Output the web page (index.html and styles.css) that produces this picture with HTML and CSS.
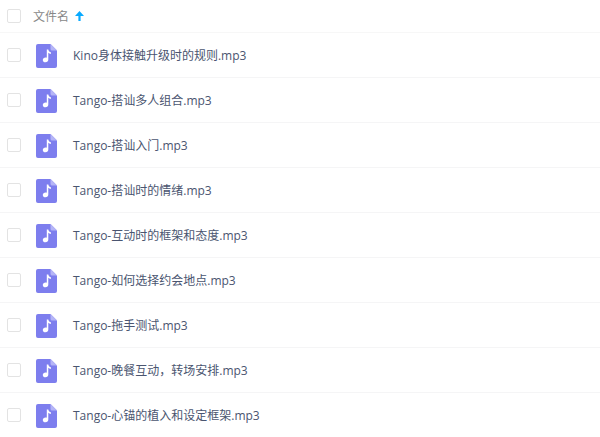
FILE: index.html
```html
<!DOCTYPE html>
<html lang="zh">
<head>
    <meta charset="UTF-8">
    <title>文件列表</title>
    <link rel="stylesheet" href="styles.css">
</head>
<body>
<svg class="sprite" width="0" height="0">
    <symbol id="music" viewBox="0 0 21 24">
        <path d="M2 0H14.500L21 6.500V22a2 2 0 0 1-2 2H2a2 2 0 0 1-2-2V2a2 2 0 0 1 2-2z" fill="#7d7eee"/>
        <path d="M14.500 0L21 6.500H16a1.500 1.500 0 0 1-1.500-1.500z" fill="#b4b4f6"/>
        <path d="M10.800 5.500h1.500c.2 1.600 1.100 2.400 2.600 2.800v1.600c-1.100-.2-2-.6-2.600-1.200v6.800c0 1.700-1.200 2.800-2.800 2.800s-2.700-1-2.700-2.400 1.200-2.500 2.800-2.500c.5 0 .9.100 1.200.3z" fill="#fff"/>
    </symbol>
</svg>
<div class="list">
    <div class="head">
        <span class="check"></span>
        <span class="head-name">文件名</span>
        <svg class="arrow" width="9" height="10" viewBox="0 0 9 10"><path d="M4.500 0L9 5H5.600v5H3.400V5H0z" fill="#09aaff"/></svg>
    </div>
    <div class="row"><span class="check"></span><svg class="icon"><use href="#music"/></svg><span class="name">Kino身体接触升级时的规则.mp3</span></div>
    <div class="row"><span class="check"></span><svg class="icon"><use href="#music"/></svg><span class="name">Tango-搭讪多人组合.mp3</span></div>
    <div class="row"><span class="check"></span><svg class="icon"><use href="#music"/></svg><span class="name">Tango-搭讪入门.mp3</span></div>
    <div class="row"><span class="check"></span><svg class="icon"><use href="#music"/></svg><span class="name">Tango-搭讪时的情绪.mp3</span></div>
    <div class="row"><span class="check"></span><svg class="icon"><use href="#music"/></svg><span class="name">Tango-互动时的框架和态度.mp3</span></div>
    <div class="row"><span class="check"></span><svg class="icon"><use href="#music"/></svg><span class="name">Tango-如何选择约会地点.mp3</span></div>
    <div class="row"><span class="check"></span><svg class="icon"><use href="#music"/></svg><span class="name">Tango-拖手测试.mp3</span></div>
    <div class="row"><span class="check"></span><svg class="icon"><use href="#music"/></svg><span class="name">Tango-晚餐互动，转场安排.mp3</span></div>
    <div class="row"><span class="check"></span><svg class="icon"><use href="#music"/></svg><span class="name">Tango-心锚的植入和设定框架.mp3</span></div>
</div>
</body>
</html>
```

FILE: styles.css
```css
body {
    margin: 0;
    background-color: #fff;
    color: #4a5570;
    font-family: "Open Sans", "Noto Sans CJK SC", sans-serif;
    font-size: 12px;
    overflow: hidden;
}
.sprite { display: block; }
.head { display: flex; align-items: center; height: 32px; padding-left: 7px; border-bottom: 1px solid #f7f7f7; color: #888; }
.head-name { margin-left: 12px; }
.arrow { margin-left: 6px; }
.row { display: flex; align-items: center; height: 44px; padding-left: 7px; border-bottom: 1px solid #f5f5f6; }
.check { width: 12px; height: 12px; border: 1px solid #e3e3e3; border-radius: 2px; flex: none; }
.icon { width: 21px; height: 24px; margin: 2px 0 0 15px; flex: none; }
.name { margin-left: 16px; white-space: nowrap; }
```
